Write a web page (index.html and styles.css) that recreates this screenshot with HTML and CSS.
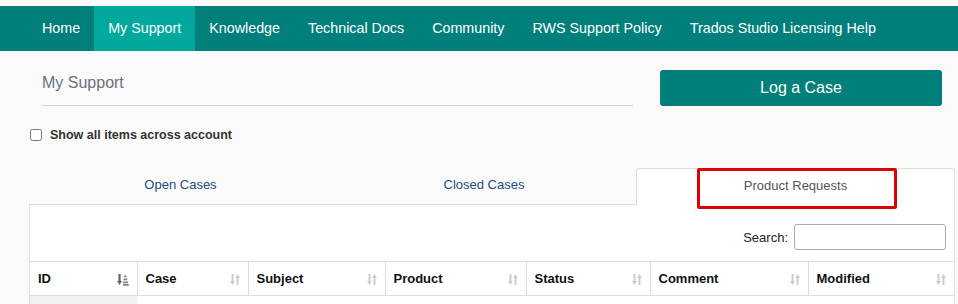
FILE: index.html
```html
<!DOCTYPE html>
<html lang="en">
<head>
    <meta charset="UTF-8">
    <meta name="viewport" content="width=device-width, initial-scale=1.0">
    <title>My Support</title>
    <link rel="stylesheet" href="styles.css">
</head>

<body>
<nav class="topnav">
    <a href="#">Home</a>
    <a href="#" class="active">My Support</a>
    <a href="#">Knowledge</a>
    <a href="#">Technical Docs</a>
    <a href="#">Community</a>
    <a href="#">RWS Support Policy</a>
    <a href="#">Trados Studio Licensing Help</a>
</nav>

<div class="page">
    <div class="head">
        <h1 class="title">My Support</h1>
        <button class="log-btn">Log a Case</button>
    </div>

    <label class="show-all">
        <input type="checkbox">
        <span>Show all items across account</span>
    </label>

    <div class="tabs">
        <a href="#" class="tab">Open Cases</a>
        <a href="#" class="tab">Closed Cases</a>
        <a href="#" class="tab active">Product Requests
            <span class="mark"></span>
        </a>
    </div>

    <div class="panel">
        <div class="search">
            <label>Search:</label>
            <input type="text">
        </div>
        <table class="cases">
            <colgroup>
                <col style="width:107px">
                <col style="width:111px">
                <col style="width:137px">
                <col style="width:141px">
                <col style="width:124px">
                <col style="width:158px">
                <col style="width:146px">
            </colgroup>
            <thead>
            <tr>
                <th class="sorted">ID
                    <svg class="sort" width="12" height="13" viewBox="0 0 12 13">
                        <rect x="1.4" y="1" width="2.2" height="8" fill="#666"/>
                        <polygon points="0,8 5,8 2.5,12" fill="#666"/>
                        <rect x="7" y="2.5" width="2.5" height="1.8" fill="#888"/>
                        <rect x="6.5" y="5.5" width="3.8" height="1.8" fill="#888"/>
                        <rect x="6" y="8.5" width="5" height="1.8" fill="#888"/>
                        <rect x="6" y="11" width="5.8" height="1.8" fill="#888"/>
                    </svg>
                </th>
                <th>Case <svg class="sort" width="10" height="13" viewBox="0 0 10 13"><use href="#unsorted"/></svg></th>
                <th>Subject <svg class="sort" width="10" height="13" viewBox="0 0 10 13"><use href="#unsorted"/></svg></th>
                <th>Product <svg class="sort" width="10" height="13" viewBox="0 0 10 13"><use href="#unsorted"/></svg></th>
                <th>Status <svg class="sort" width="10" height="13" viewBox="0 0 10 13"><use href="#unsorted"/></svg></th>
                <th>Comment <svg class="sort" width="10" height="13" viewBox="0 0 10 13"><use href="#unsorted"/></svg></th>
                <th>Modified <svg class="sort" width="10" height="13" viewBox="0 0 10 13"><use href="#unsorted"/></svg></th>
            </tr>
            </thead>
            <tbody>
            <tr>
                <td class="sorted">&nbsp;</td>
                <td></td><td></td><td></td><td></td><td></td><td></td>
            </tr>
            </tbody>
        </table>
    </div>
</div>

<svg width="0" height="0" style="position:absolute">
    <defs>
        <g id="unsorted" fill="#ccc">
            <rect x="1.5" y="1" width="2" height="8"/>
            <polygon points="0,8 5,8 2.5,12"/>
            <rect x="6.5" y="4" width="2" height="8"/>
            <polygon points="5,5 10,5 7.5,1"/>
        </g>
    </defs>
</svg>
</body>
</html>
```

FILE: styles.css
```css
* {
    box-sizing: border-box;
    margin: 0;
    padding: 0;
}

body {
    background: #fafafa;
    font-family: "Liberation Sans", Arial, sans-serif;
    color: #333;
    padding-top: 6px;
}

a {
    text-decoration: none;
}

.topnav {
    display: flex;
    height: 45px;
    background: #007f7b;
    padding-left: 28px;
}

.topnav a {
    display: block;
    padding: 0 14px;
    line-height: 45px;
    font-size: 14.3px;
    color: #fff;
}

.topnav a.active {
    background: #00a89d;
}

.page {
    margin: 0 3px 0 29px;
}

.head {
    display: flex;
    gap: 27px;
    padding: 19px 13px 0;
}

.title {
    flex: 1;
    font-size: 16px;
    font-weight: normal;
    line-height: 20px;
    color: #6c727a;
    padding: 3px 0 10px;
    border-bottom: 1px solid #d4d4d4;
}

.log-btn {
    width: 282px;
    height: 36px;
    border: none;
    border-radius: 3px;
    background: #007f7b;
    color: #fff;
    font-family: inherit;
    font-size: 16px;
}

.show-all {
    display: flex;
    align-items: center;
    gap: 8px;
    margin-top: 22px;
    height: 14px;
    font-size: 12.5px;
    font-weight: bold;
    color: #333;
}

.show-all input {
    width: 12px;
    height: 12px;
    margin: 0 0 0 1px;
}

.tabs {
    display: grid;
    grid-template-columns: 303px 304px 1fr;
    margin-top: 26px;
}

.tab {
    height: 37px;
    line-height: 34px;
    text-align: center;
    font-size: 13px;
    color: #1f4f7d;
    border-bottom: 1px solid #ddd;
}

.tab.active {
    position: relative;
    background: #fff;
    color: #555;
    border: 1px solid #ddd;
    border-bottom: none;
    border-radius: 4px 4px 0 0;
}

.mark {
    position: absolute;
    left: 60px;
    top: -1px;
    width: 200px;
    height: 41px;
    border: 3px solid #e00000;
    border-radius: 2px;
}

.panel {
    background: #fff;
    border: 1px solid #ddd;
    border-top: none;
    height: 200px;
}

.search {
    display: flex;
    justify-content: flex-end;
    align-items: center;
    gap: 6px;
    padding: 19px 8px 11px;
    font-size: 13px;
    color: #222;
}

.search input {
    width: 152px;
    height: 26px;
    border: 1px solid #aaa;
    border-radius: 3px;
}

.cases {
    width: 100%;
    table-layout: fixed;
    border-collapse: collapse;
}

.cases th {
    position: relative;
    height: 34px;
    padding: 0 8px;
    text-align: left;
    font-size: 13px;
    color: #111;
    border-top: 1px solid #ddd;
    border-bottom: 1px solid #ddd;
    border-left: 1px solid #ddd;
}

.cases th:first-child {
    border-left: none;
}

.sort {
    position: absolute;
    right: 8px;
    top: 11px;
}

.cases td {
    height: 30px;
    font-size: 13px;
}

.cases td.sorted {
    background: #f1f1f1;
    border-top: 1px solid #c8c8c8;
}
```
